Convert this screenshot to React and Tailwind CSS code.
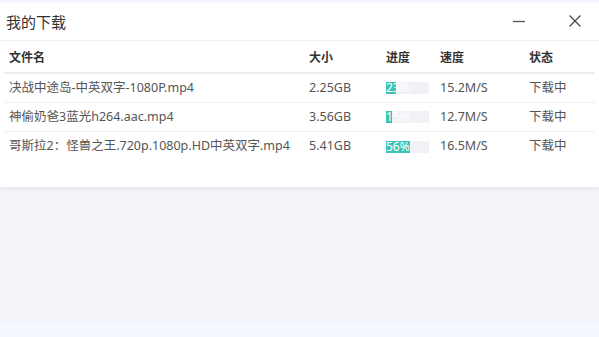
import React from 'react';

const rows = [
  { name: '决战中途岛-中英双字-1080P.mp4', size: '2.25GB', progress: 23, speed: '15.2M/S', status: '下载中' },
  { name: '神偷奶爸3蓝光h264.aac.mp4', size: '3.56GB', progress: 15, speed: '12.7M/S', status: '下载中' },
  { name: '哥斯拉2：怪兽之王.720p.1080p.HD中英双字.mp4', size: '5.41GB', progress: 56, speed: '16.5M/S', status: '下载中' },
];

const font = { fontFamily: '"Noto Sans", "Noto Sans CJK SC", sans-serif' };

const Progress = ({ value }) => (
  <div className="relative h-[12px] w-[43px] bg-[#f0f2f5] overflow-hidden">
    <div className="absolute left-0 top-0 h-full bg-[#3cc4b4]" style={{ width: `${value}%` }} />
    <span className="absolute left-0 top-[-3px] text-[12px] leading-[18px] text-white">{value}%</span>
  </div>
);

const App = () => {
  return (
    <div className="w-[599px] h-[337px] bg-[#f5f8fe] pt-[3px] text-[#555]" style={font}>
      <div className="bg-white h-[184px] shadow-[0_2px_4px_rgba(0,0,0,0.06)] relative z-10">
        <div className="h-[38px] flex items-center justify-between border-b border-[#f0f0f0] pl-[6px] pr-[17px] pt-[1px]">
          <span className="text-[15px] text-[#333]">我的下载</span>
          <div className="flex items-center gap-[42px] mb-[3px]">
            <svg width="14" height="14" viewBox="0 0 14 14">
              <path d="M1 7.5h12" stroke="#555" strokeWidth="1.3" />
            </svg>
            <svg width="14" height="14" viewBox="0 0 14 14">
              <path d="M1.5 1.5l11 11M12.5 1.5l-11 11" stroke="#444" strokeWidth="1.2" />
            </svg>
          </div>
        </div>
        <div className="px-[4px] text-[12.5px]">
          <div className="flex h-[33px] items-center pt-[3px] border-b-2 border-[#ececec] text-[#333] font-semibold text-[12px]">
            <div className="pl-[5px] w-[305px]">文件名</div>
            <div className="w-[77px]">大小</div>
            <div className="w-[54px]">进度</div>
            <div className="w-[89px]">速度</div>
            <div>状态</div>
          </div>
          {rows.map((r, i) => (
            <div
              key={i}
              className={`flex h-[29px] items-center ${i < rows.length - 1 ? 'border-b border-[#f0f0f0]' : ''}`}
            >
              <div className="pl-[5px] w-[305px] truncate">{r.name}</div>
              <div className="w-[77px]">{r.size}</div>
              <div className="w-[54px]">
                <Progress value={r.progress} />
              </div>
              <div className="w-[89px]">{r.speed}</div>
              <div>{r.status}</div>
            </div>
          ))}
        </div>
      </div>
      <div className="h-[135px] bg-[#f3f4f8]" />
    </div>
  );
};

export default App;
